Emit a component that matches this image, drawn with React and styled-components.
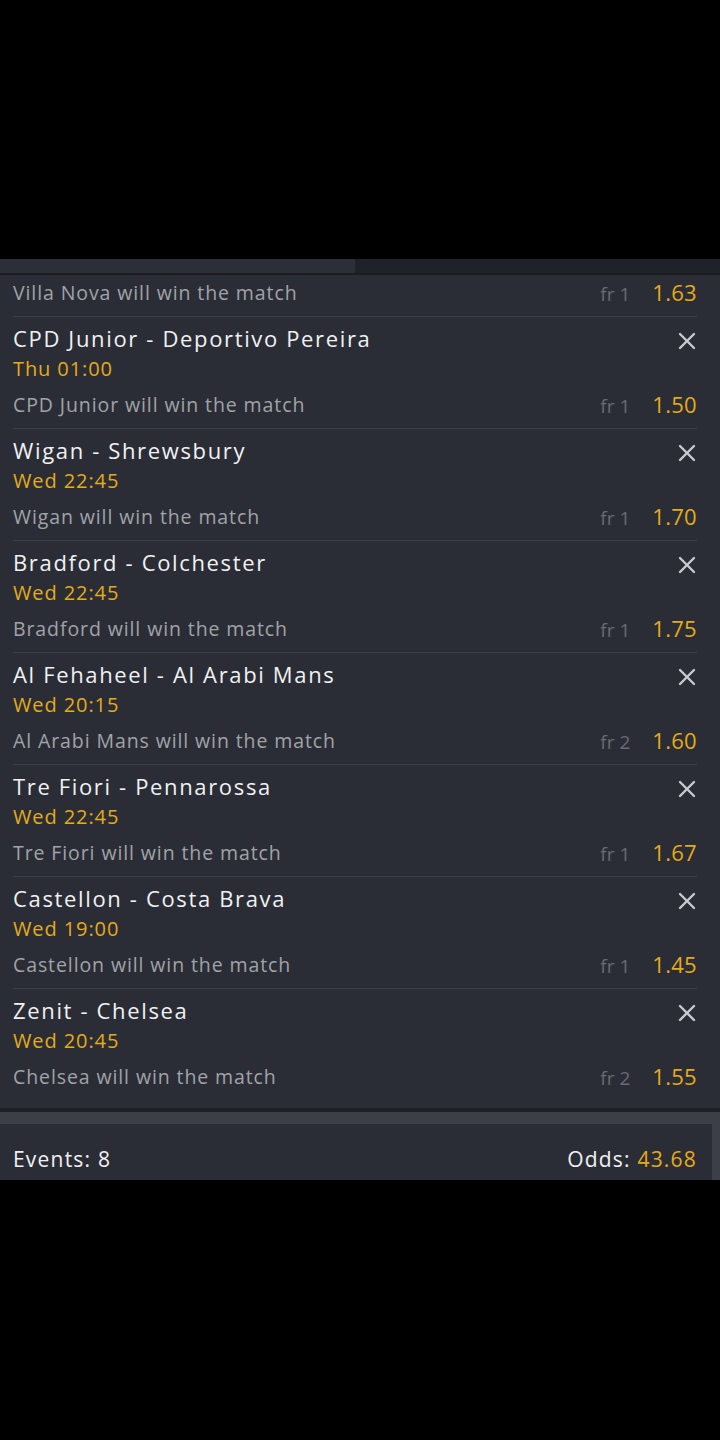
import React from "react";
import styled, { createGlobalStyle } from "styled-components";

const bets = [
  { title: "CPD Junior - Deportivo Pereira", time: "Thu 01:00", pick: "CPD Junior will win the match", fr: "fr 1", odds: "1.50" },
  { title: "Wigan - Shrewsbury", time: "Wed 22:45", pick: "Wigan will win the match", fr: "fr 1", odds: "1.70" },
  { title: "Bradford - Colchester", time: "Wed 22:45", pick: "Bradford will win the match", fr: "fr 1", odds: "1.75" },
  { title: "Al Fehaheel - Al Arabi Mans", time: "Wed 20:15", pick: "Al Arabi Mans will win the match", fr: "fr 2", odds: "1.60" },
  { title: "Tre Fiori - Pennarossa", time: "Wed 22:45", pick: "Tre Fiori will win the match", fr: "fr 1", odds: "1.67" },
  { title: "Castellon - Costa Brava", time: "Wed 19:00", pick: "Castellon will win the match", fr: "fr 1", odds: "1.45" },
  { title: "Zenit - Chelsea", time: "Wed 20:45", pick: "Chelsea will win the match", fr: "fr 2", odds: "1.55" },
];

const CloseIcon = () => (
  <svg width="18" height="18" viewBox="0 0 18 18">
    <path d="M2 2 L16 16 M16 2 L2 16" stroke="#c9cacd" strokeWidth="2.4" strokeLinecap="round" />
  </svg>
);

export default function App() {
  return (
    <>
      <GlobalStyle />
      <Screen>
        <TopSpace />
        <TabBar>
          <TabActive />
          <TabRest />
        </TabBar>
        <TabShadow />
        <List>
          <PartialRow>
            <PickLine $first>
              <Pick>Villa Nova will win the match</Pick>
              <OddsBox>
                <Fr>fr 1</Fr>
                <Odds>1.63</Odds>
              </OddsBox>
            </PickLine>
          </PartialRow>
          {bets.map((b) => (
            <Row key={b.title}>
              <TitleLine>
                <Title>{b.title}</Title>
                <CloseButton>
                  <CloseIcon />
                </CloseButton>
              </TitleLine>
              <Time>{b.time}</Time>
              <PickLine>
                <Pick>{b.pick}</Pick>
                <OddsBox>
                  <Fr>{b.fr}</Fr>
                  <Odds>{b.odds}</Odds>
                </OddsBox>
              </PickLine>
            </Row>
          ))}
        </List>
        <Divider />
        <Footer>
          <FooterInner>
            <FooterText>Events: 8</FooterText>
            <FooterText>
              Odds: <Yellow>43.68</Yellow>
            </FooterText>
          </FooterInner>
          <FooterEdge />
        </Footer>
      </Screen>
    </>
  );
}

const GlobalStyle = createGlobalStyle`
  body {
    margin: 0;
    background: #000;
    font-family: "Open Sans", Lato, sans-serif;
  }
`;

const Screen = styled.div`
  width: 720px;
  height: 1440px;
  background: #000;
`;

const TopSpace = styled.div`
  height: 259px;
`;

const TabBar = styled.div`
  display: flex;
  height: 14px;
`;

const TabActive = styled.div`
  width: 355px;
  background: #2c2f38;
`;

const TabRest = styled.div`
  flex: 1;
  background: #1f2229;
`;

const TabShadow = styled.div`
  height: 2px;
  background: #1b1d23;
`;

const List = styled.div`
  background: #2a2d36;
  padding: 0 23px 8px 13px;
`;

const PartialRow = styled.div`
  height: 41px;
  box-sizing: border-box;
  display: flex;
  align-items: center;
  padding-bottom: 7px;
`;

const Row = styled.div`
  border-top: 1px solid #3b3e47;
  padding-top: 6px;
  box-sizing: border-box;
  height: 112px;
`;

const TitleLine = styled.div`
  display: flex;
  align-items: center;
  justify-content: space-between;
  height: 30px;
`;

const Title = styled.div`
  color: #f1f1f2;
  font-size: 22px;
  letter-spacing: 1.65px;
`;

const CloseButton = styled.div`
  width: 18px;
  height: 18px;
  margin-right: 1px;
  margin-top: 6px;
`;

const Time = styled.div`
  color: #e6aa15;
  font-size: 20px;
  line-height: 30px;
  letter-spacing: 0.9px;
  margin-top: 1px;
`;

const PickLine = styled.div`
  display: flex;
  align-items: center;
  justify-content: space-between;
  height: 30px;
  margin-top: ${(p) => (p.$first ? "0" : "5px")};
  width: 100%;
`;

const Pick = styled.div`
  color: #a1a3a8;
  font-size: 19.5px;
  letter-spacing: 0.9px;
`;

const OddsBox = styled.div`
  display: flex;
  align-items: baseline;
  gap: 22px;
`;

const Fr = styled.span`
  color: #686b72;
  font-size: 19px;
`;

const Odds = styled.span`
  color: #e6aa15;
  font-size: 22px;
  letter-spacing: 0.3px;
`;

const Divider = styled.div`
  height: 4px;
  background: #1d2026;
  border-bottom: 12px solid #3c3f48;
`;

const Footer = styled.div`
  display: flex;
  height: 56px;
  background: #3c3f48;
`;

const FooterInner = styled.div`
  flex: 1;
  display: flex;
  justify-content: space-between;
  align-items: center;
  padding: 14px 15px 0 13px;
  background: #2a2d36;
`;

const FooterEdge = styled.div`
  width: 8px;
`;

const FooterText = styled.div`
  color: #f1f1f2;
  font-size: 21px;
  letter-spacing: 1.2px;
`;

const Yellow = styled.span`
  color: #e6aa15;
`;
